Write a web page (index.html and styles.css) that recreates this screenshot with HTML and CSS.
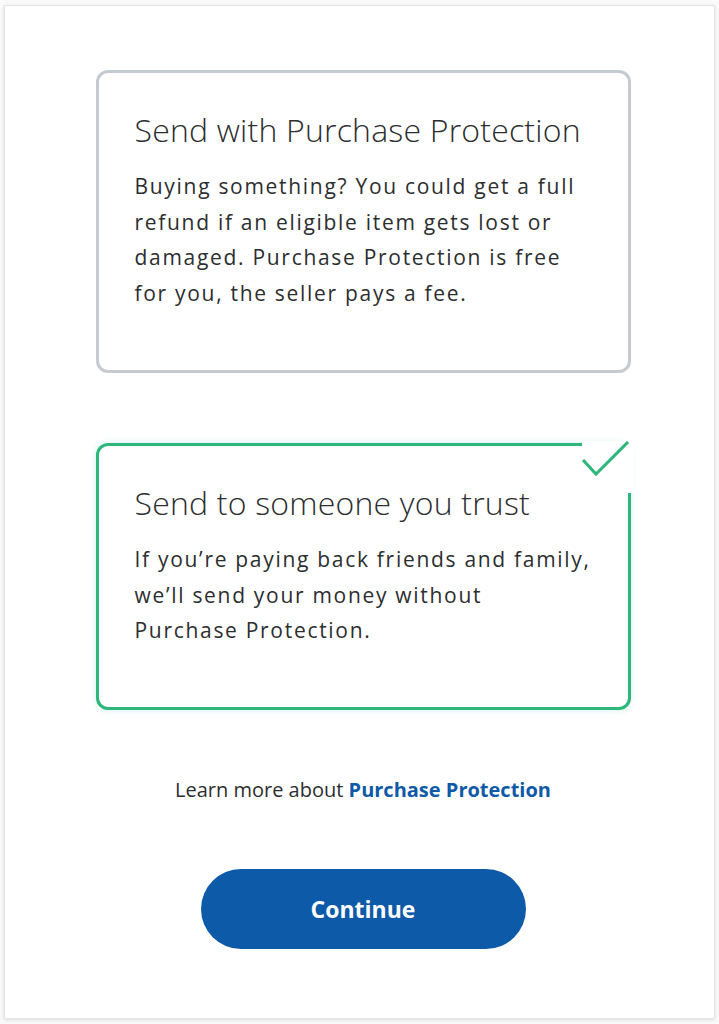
FILE: index.html
```html
<!DOCTYPE html>
<html lang="en">
<head>
    <meta charset="UTF-8">
    <meta name="viewport" content="width=device-width, initial-scale=1.0">
    <title>Send money</title>
    <link rel="stylesheet" href="styles.css">
</head>
<body>
    <div class="frame">
        <div class="options">
            <div class="option">
                <h2 class="option-title">Send with Purchase Protection</h2>
                <p class="option-text">Buying something? You could get a full<br>refund if an eligible item gets lost or<br>damaged. Purchase Protection is free<br>for you, the seller pays a fee.</p>
            </div>

            <div class="option selected">
                <span class="check">
                    <svg width="52" height="40" viewBox="0 0 52 40">
                        <path d="M5 20 L17 33 L48 2" fill="none" stroke="#2db77b" stroke-width="3" stroke-linecap="square"/>
                    </svg>
                </span>
                <h2 class="option-title">Send to someone you trust</h2>
                <p class="option-text">If you’re paying back friends and family,<br>we’ll send your money without<br>Purchase Protection.</p>
            </div>
        </div>

        <p class="learn">Learn more about <a href="#" class="learn-link">Purchase Protection</a></p>

        <button class="continue">Continue</button>
    </div>
</body>
</html>
```

FILE: styles.css
```css
body {
    margin: 0;
    padding: 5px 4px;
    background-color: #fafafa;
    font-family: "Open Sans", Arial, sans-serif;
    color: #2c2e2f;
}

.frame {
    box-sizing: border-box;
    height: 1014px;
    background-color: #fff;
    border: 1px solid #e4e4e4;
    box-shadow: 0 1px 4px rgba(0, 0, 0, 0.12);
    padding: 64px 84px 0 91px;
    display: flex;
    flex-direction: column;
    align-items: center;
}

.options {
    width: 535px;
    display: flex;
    flex-direction: column;
    gap: 70px;
}

.option {
    position: relative;
    box-sizing: border-box;
    border: 3px solid #c5cbd0;
    border-radius: 12px;
    padding: 39px 20px 0 36px;
    background-color: #fff;
}

.option:first-child {
    height: 303px;
}

.option.selected {
    height: 267px;
    border-color: #2db77b;
    box-shadow: 0 0 6px rgba(80, 190, 200, 0.25);
}

/* white notch over the top-right corner where the tick sits */
.check {
    position: absolute;
    top: -5px;
    right: -6px;
    width: 52px;
    height: 52px;
    background-color: #fff;
}

.check svg {
    display: block;
    position: absolute;
    top: 0;
    right: 3px;
}

.option-title {
    margin: 0;
    font-size: 32px;
    font-weight: 300;
    line-height: 36px;
    letter-spacing: 0.2px;
    color: #2c2e2f;
}

.option-text {
    margin: 21px 0 0 0;
    font-size: 21px;
    line-height: 35.7px;
    letter-spacing: 1.7px;
    white-space: nowrap;
    color: #2c2e2f;
}

.learn {
    margin: 67px 0 0 0;
    font-size: 20px;
    line-height: 26px;
    color: #2c2e2f;
}

.learn-link {
    color: #0e5aa7;
    font-weight: 700;
    text-decoration: none;
}

.continue {
    margin-top: 66px;
    width: 325px;
    height: 80px;
    border: none;
    border-radius: 40px;
    background-color: #0d5aa8;
    color: #fff;
    font-family: "Open Sans", Arial, sans-serif;
    font-size: 23px;
    font-weight: 700;
    cursor: pointer;
}
```
